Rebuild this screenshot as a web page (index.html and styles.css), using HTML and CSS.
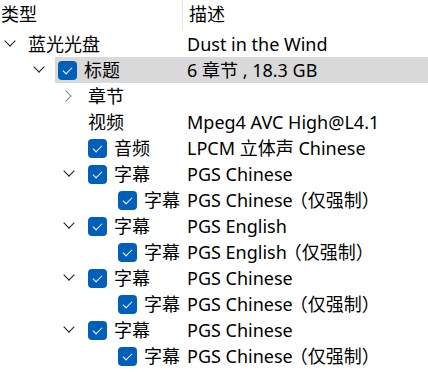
FILE: index.html
```html
<!DOCTYPE html>
<html lang="zh-CN">

<head>
    <meta charset="UTF-8">
    <meta name="viewport" content="width=device-width, initial-scale=1.0">
    <title>光盘内容</title>
    <link rel="stylesheet" href="styles.css">
</head>

<body>
    <div class="tree">
        <div class="header">
            <div class="col-name">类型</div>
            <div class="col-desc">描述</div>
        </div>

        <div class="row lv0">
            <div class="lead"><span class="chev down"></span></div>
            <div class="body">
                <div class="name">蓝光光盘</div>
                <div class="desc">Dust in the Wind</div>
            </div>
        </div>

        <div class="row lv1 selected">
            <div class="lead"><span class="chev down"></span></div>
            <div class="body">
                <div class="name"><span class="check"></span>标题</div>
                <div class="desc">6 章节 , 18.3 GB</div>
            </div>
        </div>

        <div class="row lv2">
            <div class="lead"><span class="chev right"></span></div>
            <div class="body">
                <div class="name">章节</div>
                <div class="desc"></div>
            </div>
        </div>

        <div class="row lv2">
            <div class="lead"></div>
            <div class="body">
                <div class="name">视频</div>
                <div class="desc">Mpeg4 AVC High@L4.1</div>
            </div>
        </div>

        <div class="row lv2">
            <div class="lead"></div>
            <div class="body">
                <div class="name"><span class="check"></span>音频</div>
                <div class="desc">LPCM 立体声 Chinese</div>
            </div>
        </div>

        <div class="row lv2">
            <div class="lead"><span class="chev down"></span></div>
            <div class="body">
                <div class="name"><span class="check"></span>字幕</div>
                <div class="desc">PGS Chinese</div>
            </div>
        </div>
        <div class="row lv3">
            <div class="lead"></div>
            <div class="body">
                <div class="name"><span class="check"></span>字幕</div>
                <div class="desc">PGS Chinese<span class="note">（仅强制）</span></div>
            </div>
        </div>

        <div class="row lv2">
            <div class="lead"><span class="chev down"></span></div>
            <div class="body">
                <div class="name"><span class="check"></span>字幕</div>
                <div class="desc">PGS English</div>
            </div>
        </div>
        <div class="row lv3">
            <div class="lead"></div>
            <div class="body">
                <div class="name"><span class="check"></span>字幕</div>
                <div class="desc">PGS English<span class="note">（仅强制）</span></div>
            </div>
        </div>

        <div class="row lv2">
            <div class="lead"><span class="chev down"></span></div>
            <div class="body">
                <div class="name"><span class="check"></span>字幕</div>
                <div class="desc">PGS Chinese</div>
            </div>
        </div>
        <div class="row lv3">
            <div class="lead"></div>
            <div class="body">
                <div class="name"><span class="check"></span>字幕</div>
                <div class="desc">PGS Chinese<span class="note">（仅强制）</span></div>
            </div>
        </div>

        <div class="row lv2">
            <div class="lead"><span class="chev down"></span></div>
            <div class="body">
                <div class="name"><span class="check"></span>字幕</div>
                <div class="desc">PGS Chinese</div>
            </div>
        </div>
        <div class="row lv3">
            <div class="lead"></div>
            <div class="body">
                <div class="name"><span class="check"></span>字幕</div>
                <div class="desc">PGS Chinese<span class="note">（仅强制）</span></div>
            </div>
        </div>
    </div>
</body>

</html>
```

FILE: styles.css
```css
body {
    margin: 0;
    padding: 0;
    background: #ffffff;
    color: #000000;
    font-family: "Noto Sans", "Noto Sans CJK SC", sans-serif;
    font-size: 18px;
    overflow: hidden;
}

.tree {
    width: 428px;
}

.header {
    display: flex;
    height: 31px;
    align-items: flex-start;
}

.header .col-name {
    width: 181px;
    height: 30px;
    line-height: 28px;
    padding-left: 1px;
    border-right: 1px solid #e5e5e5;
}

.header .col-desc {
    padding-left: 6px;
    line-height: 28px;
}

.row {
    display: flex;
    height: 26px;
}

.lead {
    display: flex;
    align-items: center;
    justify-content: flex-end;
    flex: none;
}

.lv0 .lead { width: 25px; }
.lv1 .lead { width: 55px; }
.lv2 .lead { width: 85px; }
.lv3 .lead { width: 115px; }

.lv0 .name { width: 159px; }
.lv1 .name { width: 129px; }
.lv2 .name { width: 99px; }
.lv3 .name { width: 69px; }

.body {
    flex: 1;
    display: flex;
    align-items: center;
    padding-left: 3px;
    line-height: 26px;
}

.selected .body {
    background: #d9d9d9;
}

.name {
    display: flex;
    align-items: center;
    flex: none;
    white-space: nowrap;
}

.desc {
    white-space: nowrap;
}

.note {
    margin-left: -3px;
}

/* chevrons drawn as rotated borders */
.chev {
    width: 20px;
    height: 20px;
    margin-right: 6px;
    position: relative;
}

.chev::before {
    content: "";
    position: absolute;
    width: 7px;
    height: 7px;
    border-right: 1.3px solid #1a1a1a;
    border-bottom: 1.3px solid #1a1a1a;
}

.chev.down::before {
    left: 6px;
    top: 3px;
    transform: rotate(45deg);
}

.chev.right::before {
    left: 3px;
    top: 6px;
    border-color: #8a8a8a;
    transform: rotate(-45deg);
}

.check {
    width: 19px;
    height: 19px;
    border-radius: 4px;
    background: #005fb8;
    margin-right: 7px;
    position: relative;
    flex: none;
}

.check::after {
    content: "";
    position: absolute;
    left: 7px;
    top: 4px;
    width: 4px;
    height: 8px;
    border-right: 1px solid #ffffff;
    border-bottom: 1px solid #ffffff;
    transform: rotate(45deg);
}
```
